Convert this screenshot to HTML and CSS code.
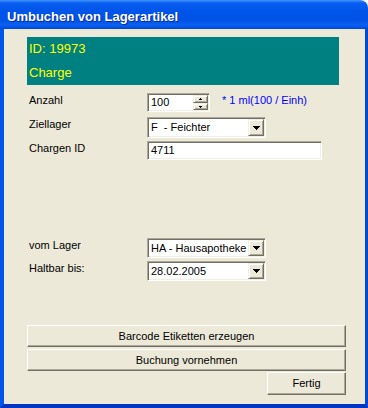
FILE: index.html
```html
<!DOCTYPE html>
<html lang="de">
<head>
<meta charset="utf-8">
<title>Umbuchen von Lagerartikel</title>
<link rel="stylesheet" href="styles.css">
</head>
<body>
<div class="window">
  <div class="titlebar"><span class="title">Umbuchen von Lagerartikel</span></div>
  <div class="client">
    <div class="panel">
      <div class="panel-line">ID: 19973</div>
      <div class="panel-line">Charge</div>
    </div>

    <div class="row row-anzahl">
      <span class="label">Anzahl</span>
      <div class="field spinner">
        <span class="value">100</span>
        <div class="spin">
          <div class="btn3d spin-up"><svg width="3" height="2" viewBox="0 0 3 2"><rect x="1" y="0" width="1" height="1"/><rect x="0" y="1" width="3" height="1"/></svg></div>
          <div class="btn3d spin-down"><svg width="3" height="2" viewBox="0 0 3 2"><rect x="0" y="0" width="3" height="1"/><rect x="1" y="1" width="1" height="1"/></svg></div>
        </div>
      </div>
      <span class="unit">* 1 ml(100 / Einh)</span>
    </div>

    <div class="row row-ziel">
      <span class="label">Ziellager</span>
      <div class="field combo">
        <span class="value">F  - Feichter</span>
        <div class="btn3d drop"><svg width="7" height="4" viewBox="0 0 7 4"><rect x="0" y="0" width="7" height="1"/><rect x="1" y="1" width="5" height="1"/><rect x="2" y="2" width="3" height="1"/><rect x="3" y="3" width="1" height="1"/></svg></div>
      </div>
    </div>

    <div class="row row-charge">
      <span class="label">Chargen ID</span>
      <div class="field text">
        <span class="value">4711</span>
      </div>
    </div>

    <div class="row row-vom">
      <span class="label">vom Lager</span>
      <div class="field combo combo-s">
        <span class="value">HA - Hausapotheke</span>
        <div class="btn3d drop"><svg width="7" height="4" viewBox="0 0 7 4"><rect x="0" y="0" width="7" height="1"/><rect x="1" y="1" width="5" height="1"/><rect x="2" y="2" width="3" height="1"/><rect x="3" y="3" width="1" height="1"/></svg></div>
      </div>
    </div>

    <div class="row row-halt">
      <span class="label">Haltbar bis:</span>
      <div class="field combo combo-s">
        <span class="value">28.02.2005</span>
        <div class="btn3d drop"><svg width="7" height="4" viewBox="0 0 7 4"><rect x="0" y="0" width="7" height="1"/><rect x="1" y="1" width="5" height="1"/><rect x="2" y="2" width="3" height="1"/><rect x="3" y="3" width="1" height="1"/></svg></div>
      </div>
    </div>

    <div class="buttons">
      <div class="cmd cmd-wide">Barcode Etiketten erzeugen</div>
      <div class="cmd cmd-wide cmd-second">Buchung vornehmen</div>
      <div class="cmd cmd-small">Fertig</div>
    </div>
  </div>
</div>
</body>
</html>
```

FILE: styles.css
```css
html, body {
  margin: 0;
  padding: 0;
  background: #ffffff;
}

body {
  font-family: "Liberation Sans", Arial, sans-serif;
  font-size: 11px;
  color: #000;
}

.window {
  width: 368px;
  height: 408px;
  display: flex;
  flex-direction: column;
  overflow: hidden;
}

.titlebar {
  height: 29px;
  box-sizing: border-box;
  padding: 4px 0 0 7px;
  line-height: 25px;
  border-top-right-radius: 8px;
  background: linear-gradient(to bottom,
    #3d95ff 0px,
    #0a5ef0 3px,
    #0055ea 10px,
    #0052e4 20px,
    #0a60f2 25px,
    #0046d8 29px);
}

.title {
  color: #ffffff;
  font-weight: bold;
  font-size: 13px;
  text-shadow: 1px 1px #0a2a9a;
  white-space: nowrap;
}

.client {
  flex: 1;
  background: #ece9d8;
  border-left: 4px solid #0055ea;
  border-right: 3px solid #0047da;
  border-bottom: 4px solid #0036c2;
  padding: 8px 26px 0 23px;
  display: flex;
  flex-direction: column;
}

.panel {
  height: 48px;
  background: #008080;
  color: #ffff00;
  font-size: 13px;
  padding-left: 2px;
}

.panel-line {
  line-height: 24px;
  height: 24px;
}

.row {
  display: flex;
  align-items: flex-start;
  margin-left: 2px;
}

.label {
  width: 118px;
  flex: none;
  line-height: 13px;
  padding-top: 1px;
  white-space: nowrap;
}

.row-anzahl { margin-top: 8px; height: 19px; }
.row-ziel { margin-top: 5px; height: 21px; }
.row-charge { margin-top: 3px; height: 19px; }
.row-vom { margin-top: 78px; height: 20px; }
.row-halt { margin-top: 3px; height: 20px; }

.field {
  box-sizing: border-box;
  border: 1px solid;
  border-color: #aca899 #ffffff #ffffff #aca899;
  box-shadow: inset 1px 1px #716f64, inset -1px -1px #f1efe2;
  background: #ffffff;
  padding: 1px;
  display: flex;
  flex: none;
}

.value {
  flex: 1;
  padding-left: 2px;
  white-space: pre;
  overflow: hidden;
}

.spinner {
  width: 63px;
  height: 19px;
}

.spinner .value,
.text .value {
  line-height: 15px;
}

.spin {
  width: 15px;
  display: flex;
  flex-direction: column;
}

.btn3d {
  box-sizing: border-box;
  background: #ece9d8;
  border: 1px solid;
  border-color: #f1efe2 #716f64 #716f64 #f1efe2;
  box-shadow: inset 1px 1px #ffffff, inset -1px -1px #aca899;
  display: flex;
  align-items: center;
  justify-content: center;
}

.btn3d svg {
  display: block;
  fill: #000;
}

.spin-up { height: 8px; }
.spin-down { height: 7px; }

.unit {
  margin-left: 12px;
  line-height: 13px;
  padding-top: 1px;
  color: #0000ff;
  white-space: nowrap;
}

.combo {
  width: 119px;
  height: 21px;
}

.combo .value {
  line-height: 17px;
}

.combo-s {
  height: 20px;
}

.combo-s .value {
  line-height: 16px;
}

.drop {
  width: 16px;
}

.text {
  width: 175px;
  height: 19px;
}

.buttons {
  margin-top: 44px;
  width: 319px;
  display: flex;
  flex-direction: column;
}

.cmd {
  box-sizing: border-box;
  background: #ece9d8;
  border: 1px solid;
  border-color: #ffffff #716f64 #716f64 #ffffff;
  box-shadow: inset -1px -1px #aca899;
  text-align: center;
  height: 22px;
  line-height: 20px;
}

.cmd-second {
  margin-top: 2px;
}

.cmd-small {
  margin-top: 1px;
  height: 23px;
  line-height: 21px;
  width: 79px;
  align-self: flex-end;
}
```
